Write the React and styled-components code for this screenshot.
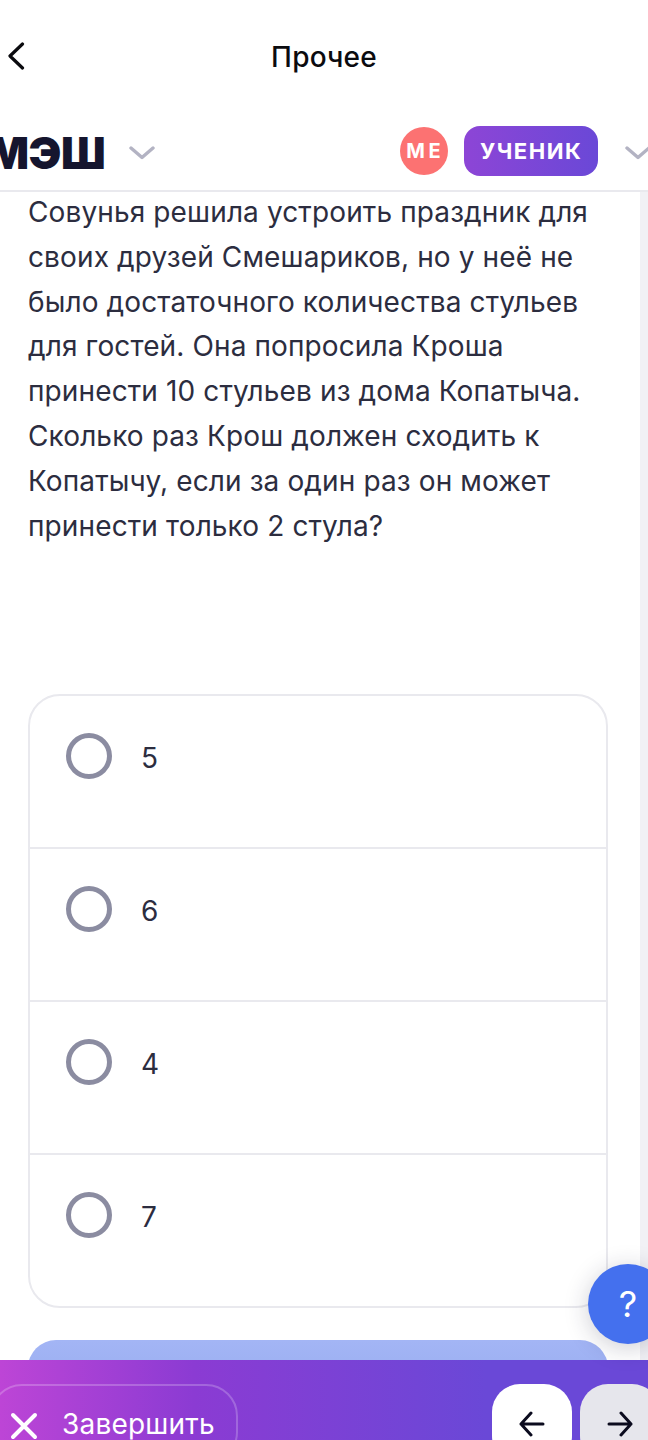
import React from "react";
import styled, { createGlobalStyle } from "styled-components";

const Global = createGlobalStyle`
  html, body { margin: 0; padding: 0; background: #fff; }
  * { box-sizing: border-box; }
`;
const Page = styled.div`
  position: relative; width: 648px; height: 1440px; overflow: hidden;
  display: flex; flex-direction: column; background: #fff;
  font-family: Inter, "Noto Sans", sans-serif; color: #2c2d3f;
`;
const TopBar = styled.div`
  height: 110px; flex: none; padding: 4px 0 0 0; display: flex; align-items: center; justify-content: center; position: relative;
`;
const Title = styled.div`font-size: 28px; font-weight: 500; color: #0b0b0f; line-height: 34px; letter-spacing: .2px;`;
const Back = styled.svg`position: absolute; left: 7px; top: 42px; width: 18px; height: 28px;`;
const Header = styled.div`
  height: 82px; flex: none; display: flex; align-items: center; border-bottom: 2px solid #e9e9ee;
`;
const Logo = styled.div`
  font-size: 44px; line-height: 44px; font-weight: 900; color: #15152e; margin-left: -13px; letter-spacing: -0.5px; margin-top: 6px;
`;
const Chevron = styled.svg`flex: none; width: 26px; height: 14px; margin-left: ${p => p.$ml}px; margin-top: 6px;`;
const Avatar = styled.div`
  width: 48px; height: 48px; border-radius: 50%; background: #fc7272; color: #fff; flex: none;
  display: flex; align-items: center; justify-content: center; font-size: 20px; font-weight: 700; letter-spacing: 3.5px; margin-left: 245px; padding-left: 2px; margin-top: 1px;
`;
const Role = styled.div`
  width: 134px; height: 50px; flex: none; margin-left: 16px; border-radius: 16px; color: #fff;
  background: linear-gradient(90deg, #8d45d6, #6a48d7); display: flex; align-items: center; justify-content: center;
  font-size: 22px; font-weight: 700; letter-spacing: 1.5px; margin-top: 1px;
`;
const Body = styled.div`flex: 1; min-height: 0; display: flex; overflow: hidden;`;
const Content = styled.div`flex: none; width: 640px; padding: 0 32px 0 28px;`;
const Track = styled.div`flex: 1; background: #f1f1f5;`;
const Question = styled.p`
  margin: -2px 0 0; font-size: 28px; line-height: 44.8px; color: #2c2d3f; letter-spacing: .12px; white-space: pre-line;
`;
const Answers = styled.div`
  margin-top: 146px; border: 2px solid #e9e9ee; border-radius: 32px; display: flex; flex-direction: column; width: 580px;
`;
const Answer = styled.div`
  height: ${p => p.$last ? 151 : 153}px; display: flex; align-items: flex-start; padding: 37px 0 0 36px;
  border-bottom: ${p => p.$last ? "none" : "2px solid #e9e9ee"};
`;
const Radio = styled.div`width: 46px; height: 46px; border-radius: 50%; border: 5px solid #8b8ca1; flex: none;`;
const AnswerText = styled.span`font-size: 28px; line-height: 46px; margin-left: 29px; margin-top: 2px; color: #2c2d3f;`;
const Submit = styled.div`margin-top: 32px; width: 580px; height: 80px; border-radius: 28px; background: linear-gradient(180deg, #a3b5f5, #93a8ed);`;
const Help = styled.div`
  position: absolute; left: 588px; top: 1264px; width: 80px; height: 80px; border-radius: 50%; background: #4470ee;
  color: #fff; font-size: 36px; font-weight: 400; display: flex; align-items: center; justify-content: center;
  box-shadow: 0 4px 24px rgba(30, 30, 60, .22);
`;
const Bottom = styled.div`
  height: 80px; flex: none; background: linear-gradient(90deg, #bd45d6 0%, #8b3bd3 30%, #6a48d7 75%, #6a48d7 100%);
  display: flex; align-items: flex-start; padding-top: 24px;
`;
const Finish = styled.div`
  width: 248px; height: 80px; margin-left: -10px; border: 2px solid rgba(255,255,255,.22); border-radius: 32px; color: #fff;
  display: flex; align-items: flex-start; padding: 16px 0 0 18px; font-size: 28px; line-height: 44px; letter-spacing: .2px; flex: none;
`;
const Cross = styled.svg`width: 28px; height: 28px; flex: none; margin: 10px 24px 0 0;`;
const NavBtn = styled.div`
  width: 80px; height: 80px; border-radius: 28px; background: ${p => p.$bg}; flex: none; margin-left: ${p => p.$ml}px;
  display: flex; justify-content: center; padding-top: 27px;
`;
const Arrow = styled.svg`width: 26px; height: 26px;`;

const Down = ({ ml }) => (
  <Chevron $ml={ml} viewBox="0 0 26 14" fill="none" stroke="#b3b3c3" strokeWidth="3.4" strokeLinecap="round" strokeLinejoin="round">
    <path d="M2 2l11 9.5L24 2" />
  </Chevron>
);

const options = ["5", "6", "4", "7"];

export default function App() {
  return (
    <Page>
      <Global />
      <TopBar>
        <Back viewBox="0 0 18 28" fill="none" stroke="#0b0b0f" strokeWidth="3.2" strokeLinecap="round" strokeLinejoin="round">
          <path d="M15.5 2L3 14 15.5 26" />
        </Back>
        <Title>Прочее</Title>
      </TopBar>
      <Header>
        <Logo>МЭШ</Logo>
        <Down ml={24} />
        <Avatar>МЕ</Avatar>
        <Role>УЧЕНИК</Role>
        <Down ml={27} />
      </Header>
      <Body>
        <Content>
          <Question>{`Совунья решила устроить праздник для
своих друзей Смешариков, но у неё не
было достаточного количества стульев
для гостей. Она попросила Кроша
принести 10 стульев из дома Копатыча.
Сколько раз Крош должен сходить к
Копатычу, если за один раз он может
принести только 2 стула?`}</Question>
          <Answers>
            {options.map((o, i) => (
              <Answer key={o} $last={i === options.length - 1}>
                <Radio />
                <AnswerText>{o}</AnswerText>
              </Answer>
            ))}
          </Answers>
          <Submit />
        </Content>
        <Track />
      </Body>
      <Bottom>
        <Finish>
          <Cross viewBox="0 0 28 28" fill="none" stroke="#fff" strokeWidth="4" strokeLinecap="round">
            <path d="M3 3l22 22M25 3L3 25" />
          </Cross>
          Завершить
        </Finish>
        <NavBtn $bg="#fff" $ml={254}>
          <Arrow viewBox="0 0 26 26" fill="none" stroke="#0b0b1e" strokeWidth="3" strokeLinecap="round" strokeLinejoin="round">
            <path d="M24 13H2M12 2L2 13l10 11" />
          </Arrow>
        </NavBtn>
        <NavBtn $bg="#e6e6ec" $ml={8}>
          <Arrow viewBox="0 0 26 26" fill="none" stroke="#0b0b1e" strokeWidth="3" strokeLinecap="round" strokeLinejoin="round">
            <path d="M2 13h22M14 2l10 11-10 11" />
          </Arrow>
        </NavBtn>
      </Bottom>
      <Help>?</Help>
    </Page>
  );
}
